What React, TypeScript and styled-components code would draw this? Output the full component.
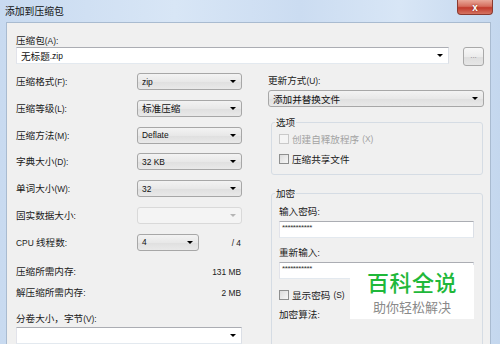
import React from "react";
import styled, { createGlobalStyle, css } from "styled-components";

const GlobalStyle = createGlobalStyle`
  html, body { margin: 0; padding: 0; background: #c9dbf0; overflow: hidden; }
  body {
    font-family: "Noto Sans CJK SC", "Liberation Sans", sans-serif;
    font-size: 9.6px;
    color: #1a1a1a;
  }
  * { box-sizing: border-box; }
`;

const LatinRun = styled.span`
  font-family: "Liberation Sans", sans-serif;
  font-size: 8.4px;
`;

const CJK = /[\u3000-\u9fff\uff00-\uffef]/;

function Txt({ children }: { children: string }) {
  const parts = children.split(/([^\u3000-\u9fff\uff00-\uffef]+)/).filter(Boolean);
  return (
    <>
      {parts.map((p, i) =>
        CJK.test(p) ? <React.Fragment key={i}>{p}</React.Fragment> : <LatinRun key={i}>{p}</LatinRun>
      )}
    </>
  );
}

const Window = styled.div`
  position: relative;
  width: 500px;
  height: 344px;
  overflow: hidden;
  display: flex;
  flex-direction: column;
  background: linear-gradient(to right, #c8daf0 0%, #d8e6f6 35%, #cbdcf1 60%, #d8e6f6 80%, #c4d7ee 100%);
`;

const TitleBar = styled.div`
  height: 22px;
  flex: none;
  display: flex;
  align-items: flex-start;
  padding: 0 7px 0 5px;
`;

const Title = styled.span`
  line-height: 22px;
  font-size: 9.8px;
  color: #111;
`;

const CloseButton = styled.div`
  margin-left: auto;
  width: 36px;
  height: 15px;
  border: 1px solid #8a3a30;
  border-top: none;
  border-radius: 0 0 4px 4px;
  background: linear-gradient(#e9a899, #d56e5e 45%, #c13a2c 55%, #d57462);
  display: flex;
  align-items: center;
  justify-content: center;
  color: #fff;
  font-family: "Liberation Sans", sans-serif;
  font-weight: bold;
  font-size: 10px;
  text-shadow: 0 0 2px #7a1d14;
`;

const Frame = styled.div`
  flex: 1;
  display: flex;
  padding: 0 9px 0 6px;
  min-height: 0;
`;

const Content = styled.div`
  flex: 1;
  background: #f0f0f0;
  border: 1px solid #a9bbd0;
  border-bottom: none;
  padding: 11px 6px 0 9px;
  display: flex;
  flex-direction: column;
`;

const Label = styled.div<{ $lh?: number; $mt?: number }>`
  width: fit-content;
  line-height: ${(p) => p.$lh ?? 14}px;
  margin-top: ${(p) => p.$mt ?? 0}px;
  white-space: nowrap;
  color: #1a1a1a;
`;

const ArchiveRow = styled.div`
  display: flex;
  justify-content: space-between;
  align-items: flex-start;
`;

type Variant = "list" | "edit" | "disabled";

const ComboBox = styled.div<{ $variant?: Variant; $width?: number; $mt?: number }>`
  height: 17px;
  flex: none;
  display: flex;
  align-items: center;
  padding: 0 5px 0 4px;
  margin-top: ${(p) => p.$mt ?? 0}px;
  width: ${(p) => (p.$width ? `${p.$width}px` : "100%")};
  color: #111;
  white-space: nowrap;
  ${(p) =>
    p.$variant === "edit"
      ? css`
          background: #fff;
          border: 1px solid;
          border-color: #abadb3 #dbdfe6 #e3e9ef #e2e3ea;
        `
      : p.$variant === "disabled"
      ? css`
          background: #f4f4f4;
          border: 1px solid #d9d9d9;
          border-radius: 3px;
        `
      : css`
          background: linear-gradient(#f3f3f3, #e8e8e8 50%, #dfdfdf 51%, #e9e9e9);
          border: 1px solid #a7a7a7;
          border-radius: 3px;
        `}
`;

const Arrow = styled.span<{ $disabled?: boolean }>`
  margin-left: auto;
  width: 0;
  height: 0;
  border-left: 3px solid transparent;
  border-right: 3px solid transparent;
  border-top: 3px solid ${(p) => (p.$disabled ? "#b5b5b5" : "#000")};
`;

const BrowseButton = styled.div`
  width: 21px;
  height: 19px;
  border: 1px solid #a9a9a9;
  border-radius: 3px;
  background: linear-gradient(#f7f7f7, #ececec 50%, #dedede 51%, #e6e6e6);
  color: #8c8c8c;
  display: flex;
  align-items: center;
  justify-content: center;
  font-family: "Liberation Sans", sans-serif;
  font-size: 8px;
  padding-bottom: 2px;
`;

const Columns = styled.div`
  display: flex;
  gap: 26px;
  margin-top: 7px;
`;

const LeftCol = styled.div`
  width: 226px;
  flex: none;
  display: flex;
  flex-direction: column;
`;

const FieldList = styled.div`
  display: flex;
  flex-direction: column;
  gap: 9.75px;
`;

const FieldRow = styled.div<{ $cols?: string }>`
  display: grid;
  grid-template-columns: ${(p) => p.$cols ?? "121px 1fr"};
  align-items: center;
  height: 17px;
`;

const RightText = styled.span`
  text-align: right;
  padding-right: 1px;
`;

const InfoRow = styled.div<{ $mt: number }>`
  display: flex;
  justify-content: space-between;
  line-height: 14px;
  margin-top: ${(p) => p.$mt}px;
  padding-right: 1px;
`;

const RightCol = styled.div`
  flex: 1;
  display: flex;
  flex-direction: column;
`;

const GroupBox = styled.fieldset<{ $mt: number; $pt: number; $pb: number }>`
  margin: ${(p) => p.$mt}px 1px 0 3px;
  padding: ${(p) => p.$pt}px 8px ${(p) => p.$pb}px 7px;
  border: 1px solid #d5dce4;
  border-radius: 3px;
  min-width: 0;
  display: flex;
  flex-direction: column;
  align-items: stretch;
`;

const Legend = styled.legend`
  padding: 0 1px;
  margin-left: -4px;
  line-height: 12px;
  font-size: 9.6px;
  color: #1a1a1a;
`;

const CheckRow = styled.div<{ $mt?: number; $disabled?: boolean }>`
  display: flex;
  align-self: flex-start;
  align-items: center;
  gap: 3px;
  line-height: 14px;
  margin-top: ${(p) => p.$mt ?? 0}px;
  color: ${(p) => (p.$disabled ? "#a3a3a3" : "#1a1a1a")};
`;

const CheckBox = styled.span<{ $disabled?: boolean }>`
  width: 10px;
  height: 10px;
  flex: none;
  border: 1px solid ${(p) => (p.$disabled ? "#c9c9c9" : "#8e8f8f")};
  background: ${(p) =>
    p.$disabled ? "#f4f4f4" : "linear-gradient(135deg, #dcdcdc, #f7f7f7)"};
`;

const PasswordInput = styled.div<{ $mt: number }>`
  height: 17px;
  margin-top: ${(p) => p.$mt}px;
  background: #fff;
  border: 1px solid;
  border-color: #abadb3 #dbdfe6 #e3e9ef #e2e3ea;
  padding-left: 2px;
  font-family: "Liberation Sans", sans-serif;
  font-size: 8px;
  line-height: 12px;
  letter-spacing: -0.4px;
  color: #333;
  overflow: hidden;
  white-space: nowrap;
`;

const Watermark = styled.div`
  position: absolute;
  left: 350px;
  top: 265px;
  width: 124px;
  height: 54px;
  background: #fff;
  display: flex;
  flex-direction: column;
  align-items: center;
  justify-content: center;
`;

const WatermarkTitle = styled.div`
  font-size: 22px;
  line-height: 24px;
  font-weight: 500;
  color: #1fb83a;
  letter-spacing: 0.5px;
`;

const WatermarkSub = styled.div`
  font-size: 13px;
  line-height: 16px;
  color: #8a8a8a;
  margin-top: 6px;
`;

const leftFields: { label: string; value: string; variant?: Variant }[] = [
  { label: "压缩格式(F):", value: "zip" },
  { label: "压缩等级(L):", value: "标准压缩" },
  { label: "压缩方法(M):", value: "Deflate" },
  { label: "字典大小(D):", value: "32 KB" },
  { label: "单词大小(W):", value: "32" },
  { label: "固实数据大小:", value: "", variant: "disabled" },
];

export default function App() {
  return (
    <>
      <GlobalStyle />
      <Window>
        <TitleBar>
          <Title>添加到压缩包</Title>
          <CloseButton>x</CloseButton>
        </TitleBar>
        <Frame>
          <Content>
            <Label $lh={12}>
              <Txt>压缩包(A):</Txt>
            </Label>
            <ArchiveRow>
              <ComboBox $variant="edit" $width={433}>
                <Txt>无标题.zip</Txt>
                <Arrow />
              </ComboBox>
              <BrowseButton>...</BrowseButton>
            </ArchiveRow>
            <Columns>
              <LeftCol>
                <FieldList>
                  {leftFields.map((f) => (
                    <FieldRow key={f.label}>
                      <Label>
                        <Txt>{f.label}</Txt>
                      </Label>
                      <ComboBox $variant={f.variant ?? "list"}>
                        <Txt>{f.value}</Txt>
                        <Arrow $disabled={f.variant === "disabled"} />
                      </ComboBox>
                    </FieldRow>
                  ))}
                  <FieldRow $cols="121px 62px 1fr">
                    <Label>
                      <Txt>CPU 线程数:</Txt>
                    </Label>
                    <ComboBox $variant="list">
                      <Txt>4</Txt>
                      <Arrow />
                    </ComboBox>
                    <RightText>
                      <Txt>/ 4</Txt>
                    </RightText>
                  </FieldRow>
                </FieldList>
                <InfoRow $mt={13.5}>
                  <span>
                    <Txt>压缩所需内存:</Txt>
                  </span>
                  <span>
                    <Txt>131 MB</Txt>
                  </span>
                </InfoRow>
                <InfoRow $mt={6}>
                  <span>
                    <Txt>解压缩所需内存:</Txt>
                  </span>
                  <span>
                    <Txt>2 MB</Txt>
                  </span>
                </InfoRow>
                <Label $mt={11}>
                  <Txt>分卷大小，字节(V):</Txt>
                </Label>
                <ComboBox $variant="edit" $mt={1}>
                  <Arrow />
                </ComboBox>
              </LeftCol>
              <RightCol>
                <Label>
                  <Txt>更新方式(U):</Txt>
                </Label>
                <ComboBox $variant="list" $mt={2}>
                  添加并替换文件
                  <Arrow />
                </ComboBox>
                <GroupBox $mt={9} $pt={4} $pb={8}>
                  <Legend>选项</Legend>
                  <CheckRow $disabled>
                    <CheckBox $disabled />
                    <Txt>创建自释放程序(X)</Txt>
                  </CheckRow>
                  <CheckRow $mt={6}>
                    <CheckBox />
                    压缩共享文件
                  </CheckRow>
                </GroupBox>
                <GroupBox $mt={12} $pt={5} $pb={40}>
                  <Legend>加密</Legend>
                  <Label>
                    <Txt>输入密码:</Txt>
                  </Label>
                  <PasswordInput $mt={2}>***********</PasswordInput>
                  <Label $mt={7}>
                    <Txt>重新输入:</Txt>
                  </Label>
                  <PasswordInput $mt={2}>***********</PasswordInput>
                  <CheckRow $mt={9}>
                    <CheckBox />
                    <Txt>显示密码(S)</Txt>
                  </CheckRow>
                  <Label $mt={5}>
                    <Txt>加密算法:</Txt>
                  </Label>
                </GroupBox>
              </RightCol>
            </Columns>
          </Content>
        </Frame>
        <Watermark>
          <WatermarkTitle>百科全说</WatermarkTitle>
          <WatermarkSub>助你轻松解决</WatermarkSub>
        </Watermark>
      </Window>
    </>
  );
}
